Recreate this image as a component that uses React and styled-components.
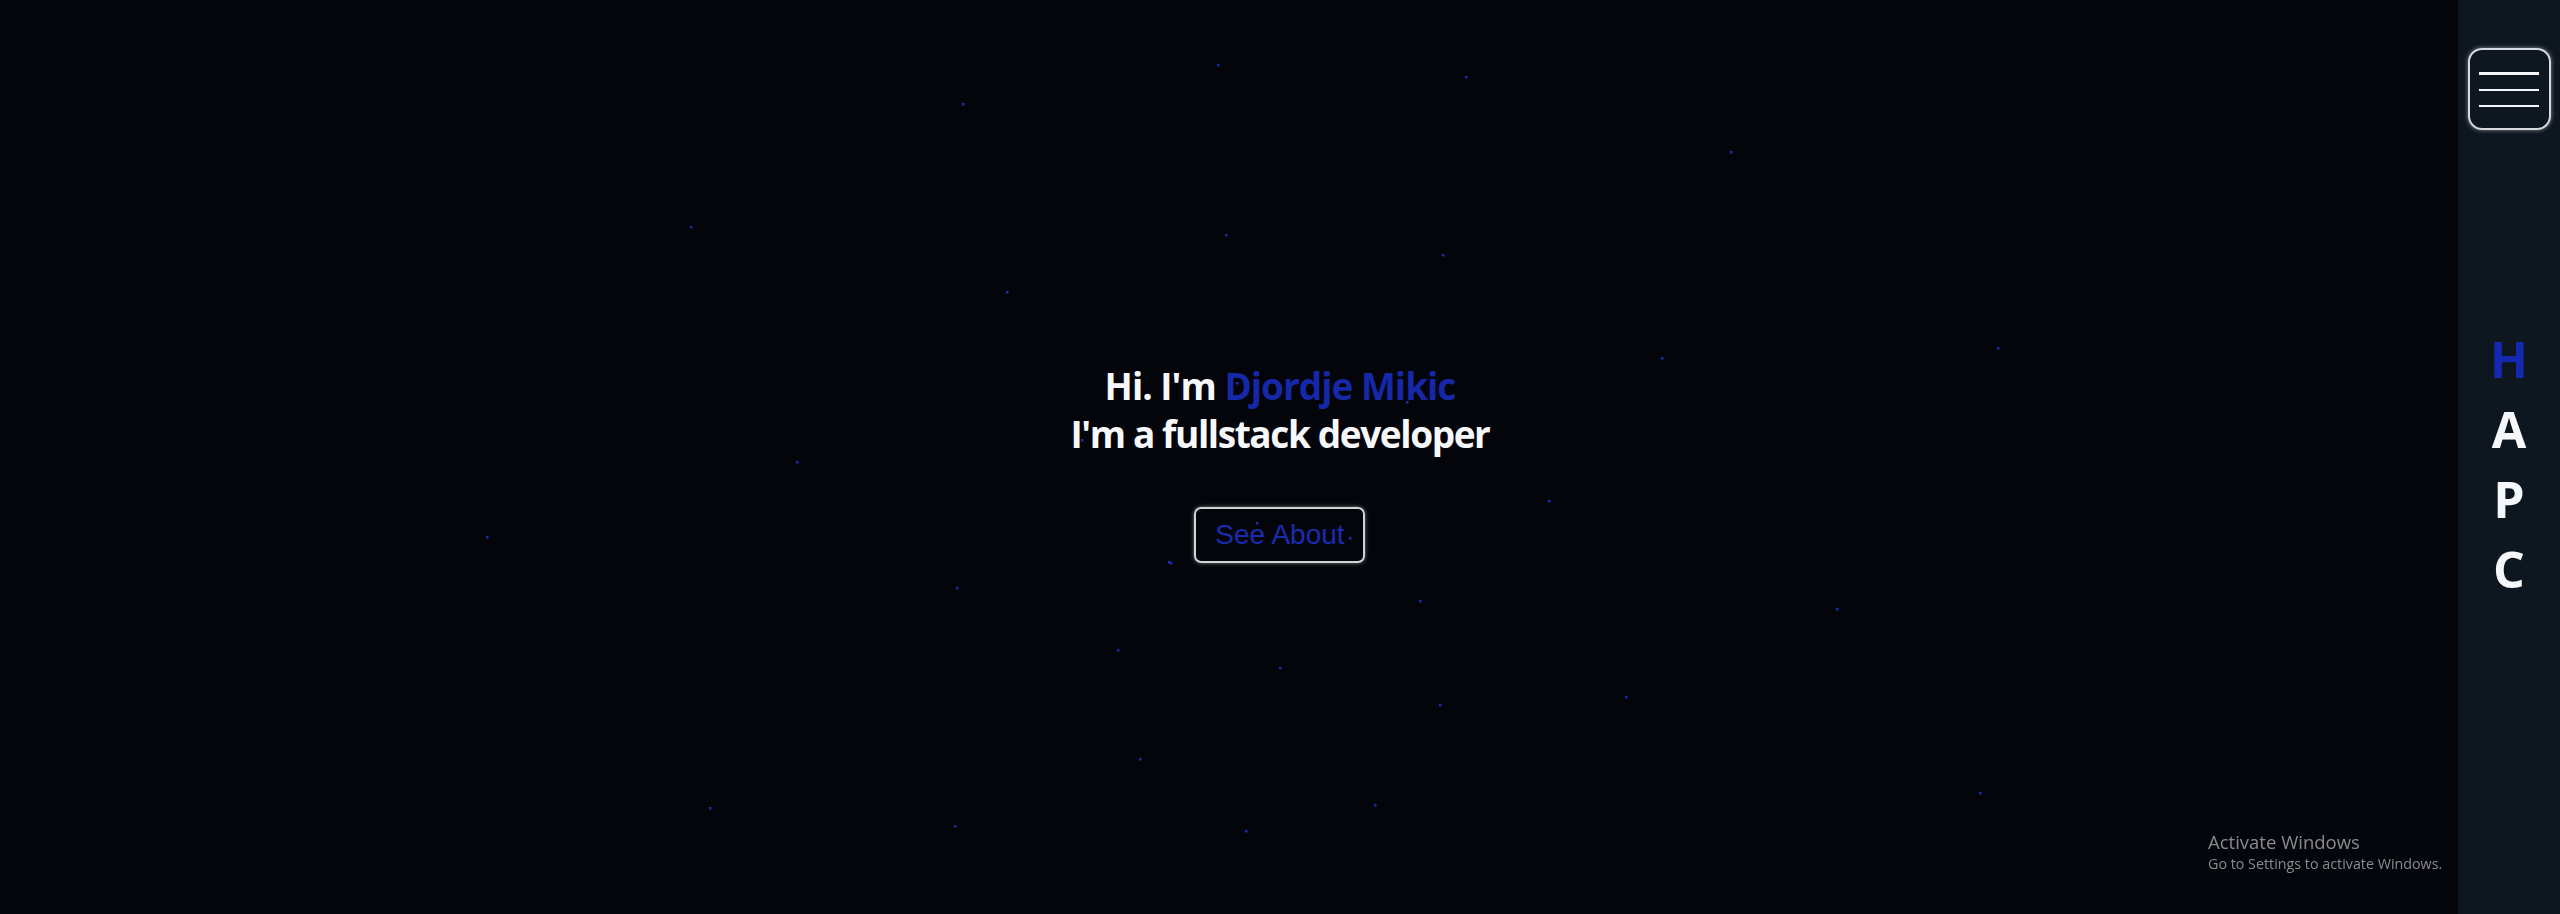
import React from "react";
import styled, { createGlobalStyle } from "styled-components";

const GlobalStyle = createGlobalStyle`
  html, body { margin: 0; padding: 0; background: #04050b; }
  body { font-family: "Open Sans", "Noto Sans", sans-serif; overflow: hidden; }
  * { box-sizing: border-box; }
`;

const STARS = [
  [963, 104], [1218, 65], [1466, 77], [1731, 152], [691, 227], [1226, 235],
  [1443, 255], [1007, 292], [1662, 358], [1998, 348], [797, 462], [1549, 501],
  [487, 537], [1169, 562], [957, 588], [1420, 601], [1837, 609], [1118, 650],
  [1280, 668], [1440, 705], [1626, 697], [1140, 759], [710, 808], [955, 826],
  [1246, 831], [1375, 805], [1980, 793], [1082, 440], [1171, 563], [1257, 523],
  [1350, 538], [1237, 383], [1407, 402],
];

const Page = styled.main`
  position: relative;
  width: 100vw;
  height: 100vh;
  min-height: 914px;
  background: #04050b;
  display: flex;
  align-items: center;
  justify-content: center;
  padding-top: 11px;
`;

const StarField = styled.svg`
  position: absolute;
  inset: 0;
  width: 100%;
  height: 100%;
  pointer-events: none;
`;

const Hero = styled.section`
  position: relative;
  display: flex;
  flex-direction: column;
  align-items: center;
`;

const Heading = styled.h1`
  margin: 0;
  font-family: "Open Sans", "Noto Sans", sans-serif;
  font-weight: 700;
  font-size: 37px;
  line-height: 48px;
  color: #f7f8fc;
  text-align: center;
`;

const Line = styled.span`
  display: block;
  letter-spacing: ${(p) => (p.$tight ? "-1.4px" : "-1px")};
`;

const Accent = styled.span`
  color: #1428a8;
`;

const AboutButton = styled.button`
  margin-top: 49px;
  width: 171px;
  height: 56px;
  border: 2px solid #d2d4d8;
  border-radius: 7px;
  background: transparent;
  box-shadow: 0 0 4px rgba(255, 255, 255, 0.45);
  font-family: "Liberation Sans", Arial, sans-serif;
  font-size: 28px;
  color: #1a2cb0;
  cursor: pointer;
  padding: 0;
`;

const Sidebar = styled.aside`
  position: fixed;
  top: 0;
  right: 0;
  width: 102px;
  height: 100vh;
  background: #0e1720;
  display: flex;
  flex-direction: column;
  align-items: center;
`;

const MenuButton = styled.button`
  margin-top: 48px;
  width: 83px;
  height: 82px;
  border: 2px solid #d6d9de;
  border-radius: 14px;
  background: transparent;
  box-shadow: 0 0 4px rgba(255, 255, 255, 0.5);
  display: flex;
  flex-direction: column;
  align-items: center;
  justify-content: center;
  gap: 14px;
  padding: 0;
  cursor: pointer;
`;

const Bar = styled.span`
  display: block;
  width: 60px;
  height: ${(p) => (p.$thick ? 3 : 2)}px;
  background: #f4f5f8;
`;

const Nav = styled.nav`
  margin-top: 194px;
  display: flex;
  flex-direction: column;
  align-items: center;
`;

const NavLetter = styled.a`
  display: block;
  font-family: "Open Sans", "Noto Sans", sans-serif;
  font-weight: 700;
  font-size: 50px;
  line-height: 70px;
  color: ${(p) => (p.$active ? "#1428b0" : "#f6f7fb")};
  text-decoration: none;
`;

const Watermark = styled.div`
  position: fixed;
  top: 831px;
  left: 2208px;
  font-family: "Open Sans", "Noto Sans", sans-serif;
  color: #8a8b8f;
`;

const WatermarkTitle = styled.div`
  font-size: 18.5px;
  line-height: 22px;
`;

const WatermarkSub = styled.div`
  font-size: 14.3px;
  line-height: 22px;
`;

export default function App() {
  return (
    <>
      <GlobalStyle />
      <Page>
        <StarField viewBox="0 0 2560 914" preserveAspectRatio="none">
          {STARS.map(([x, y], i) => (
            <rect key={i} x={x - 1} y={y - 1} width="2.5" height="2.5" fill="#1a2cb4" />
          ))}
        </StarField>
        <Hero>
          <Heading>
            <Line>
              Hi. I'm <Accent>Djordje Mikic</Accent>
            </Line>
            <Line $tight>I'm a fullstack developer</Line>
          </Heading>
          <AboutButton>See About</AboutButton>
        </Hero>
      </Page>
      <Sidebar>
        <MenuButton aria-label="menu">
          <Bar $thick />
          <Bar />
          <Bar />
        </MenuButton>
        <Nav>
          <NavLetter $active>H</NavLetter>
          <NavLetter>A</NavLetter>
          <NavLetter>P</NavLetter>
          <NavLetter>C</NavLetter>
        </Nav>
      </Sidebar>
      <Watermark>
        <WatermarkTitle>Activate Windows</WatermarkTitle>
        <WatermarkSub>Go to Settings to activate Windows.</WatermarkSub>
      </Watermark>
    </>
  );
}
